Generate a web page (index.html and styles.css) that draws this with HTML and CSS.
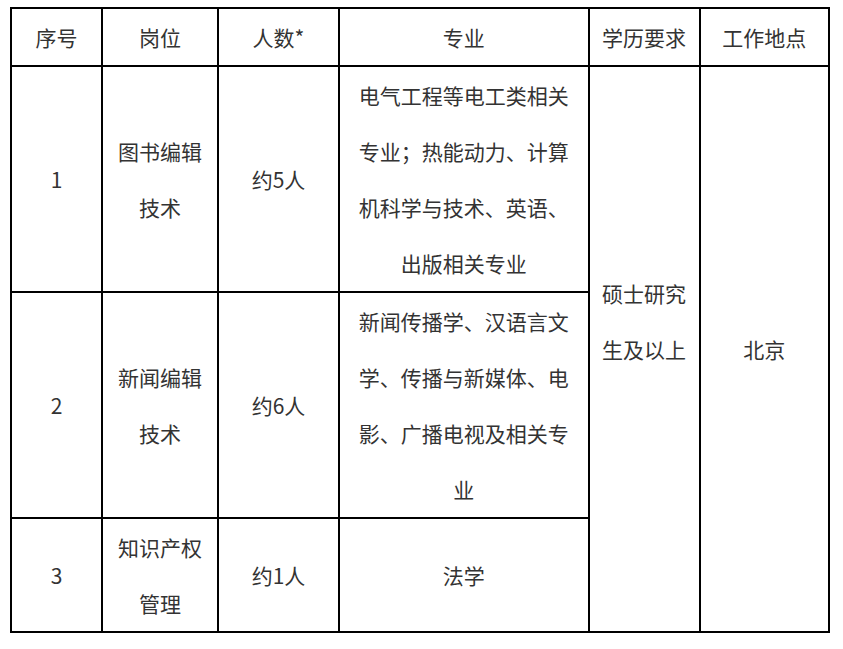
FILE: index.html
```html
<!DOCTYPE html>
<html lang="zh">
<head>
<meta charset="utf-8">
<link rel="stylesheet" href="styles.css">
</head>
<body>
<table class="jobs">
  <colgroup>
    <col class="c1"><col class="c2"><col class="c3"><col class="c4"><col class="c5"><col class="c6">
  </colgroup>
  <tr class="head">
    <td>序号</td><td>岗位</td><td>人数*</td><td>专业</td><td>学历要求</td><td>工作地点</td>
  </tr>
  <tr class="r1">
    <td>1</td>
    <td>图书编辑技术</td>
    <td>约5人</td>
    <td>电气工程等电工类相关专业；热能动力、计算机科学与技术、英语、出版相关专业</td>
    <td rowspan="3">硕士研究生及以上<span class="blank"></span></td>
    <td rowspan="3">北京</td>
  </tr>
  <tr class="r2">
    <td>2</td>
    <td>新闻编辑技术</td>
    <td>约6人</td>
    <td>新闻传播学、汉语言文学、传播与新媒体、电影、广播电视及相关专业</td>
  </tr>
  <tr class="r3">
    <td>3</td>
    <td>知识产权管理</td>
    <td>约1人</td>
    <td>法学</td>
  </tr>
</table>
</body>
</html>
```
FILE: styles.css
```css
html, body {
  margin: 0;
  background: #fff;
}
body {
  padding: 7px 0 0 10px;
  font-family: "Noto Sans CJK SC", "Noto Sans", sans-serif;
  color: #333;
}
.jobs {
  border-collapse: collapse;
  table-layout: fixed;
  width: 818px;
  font-size: 21px;
  line-height: 56px;
}
.jobs td {
  border: 2px solid #000;
  padding: 0 10px;
  text-align: center;
  vertical-align: middle;
}
.blank {
  display: block;
  height: 56px;
}
.c1 { width: 91px; }
.c2 { width: 116px; }
.c3 { width: 121px; }
.c4 { width: 249.5px; }
.c5 { width: 111px; }
.c6 { width: 129.5px; }
```
